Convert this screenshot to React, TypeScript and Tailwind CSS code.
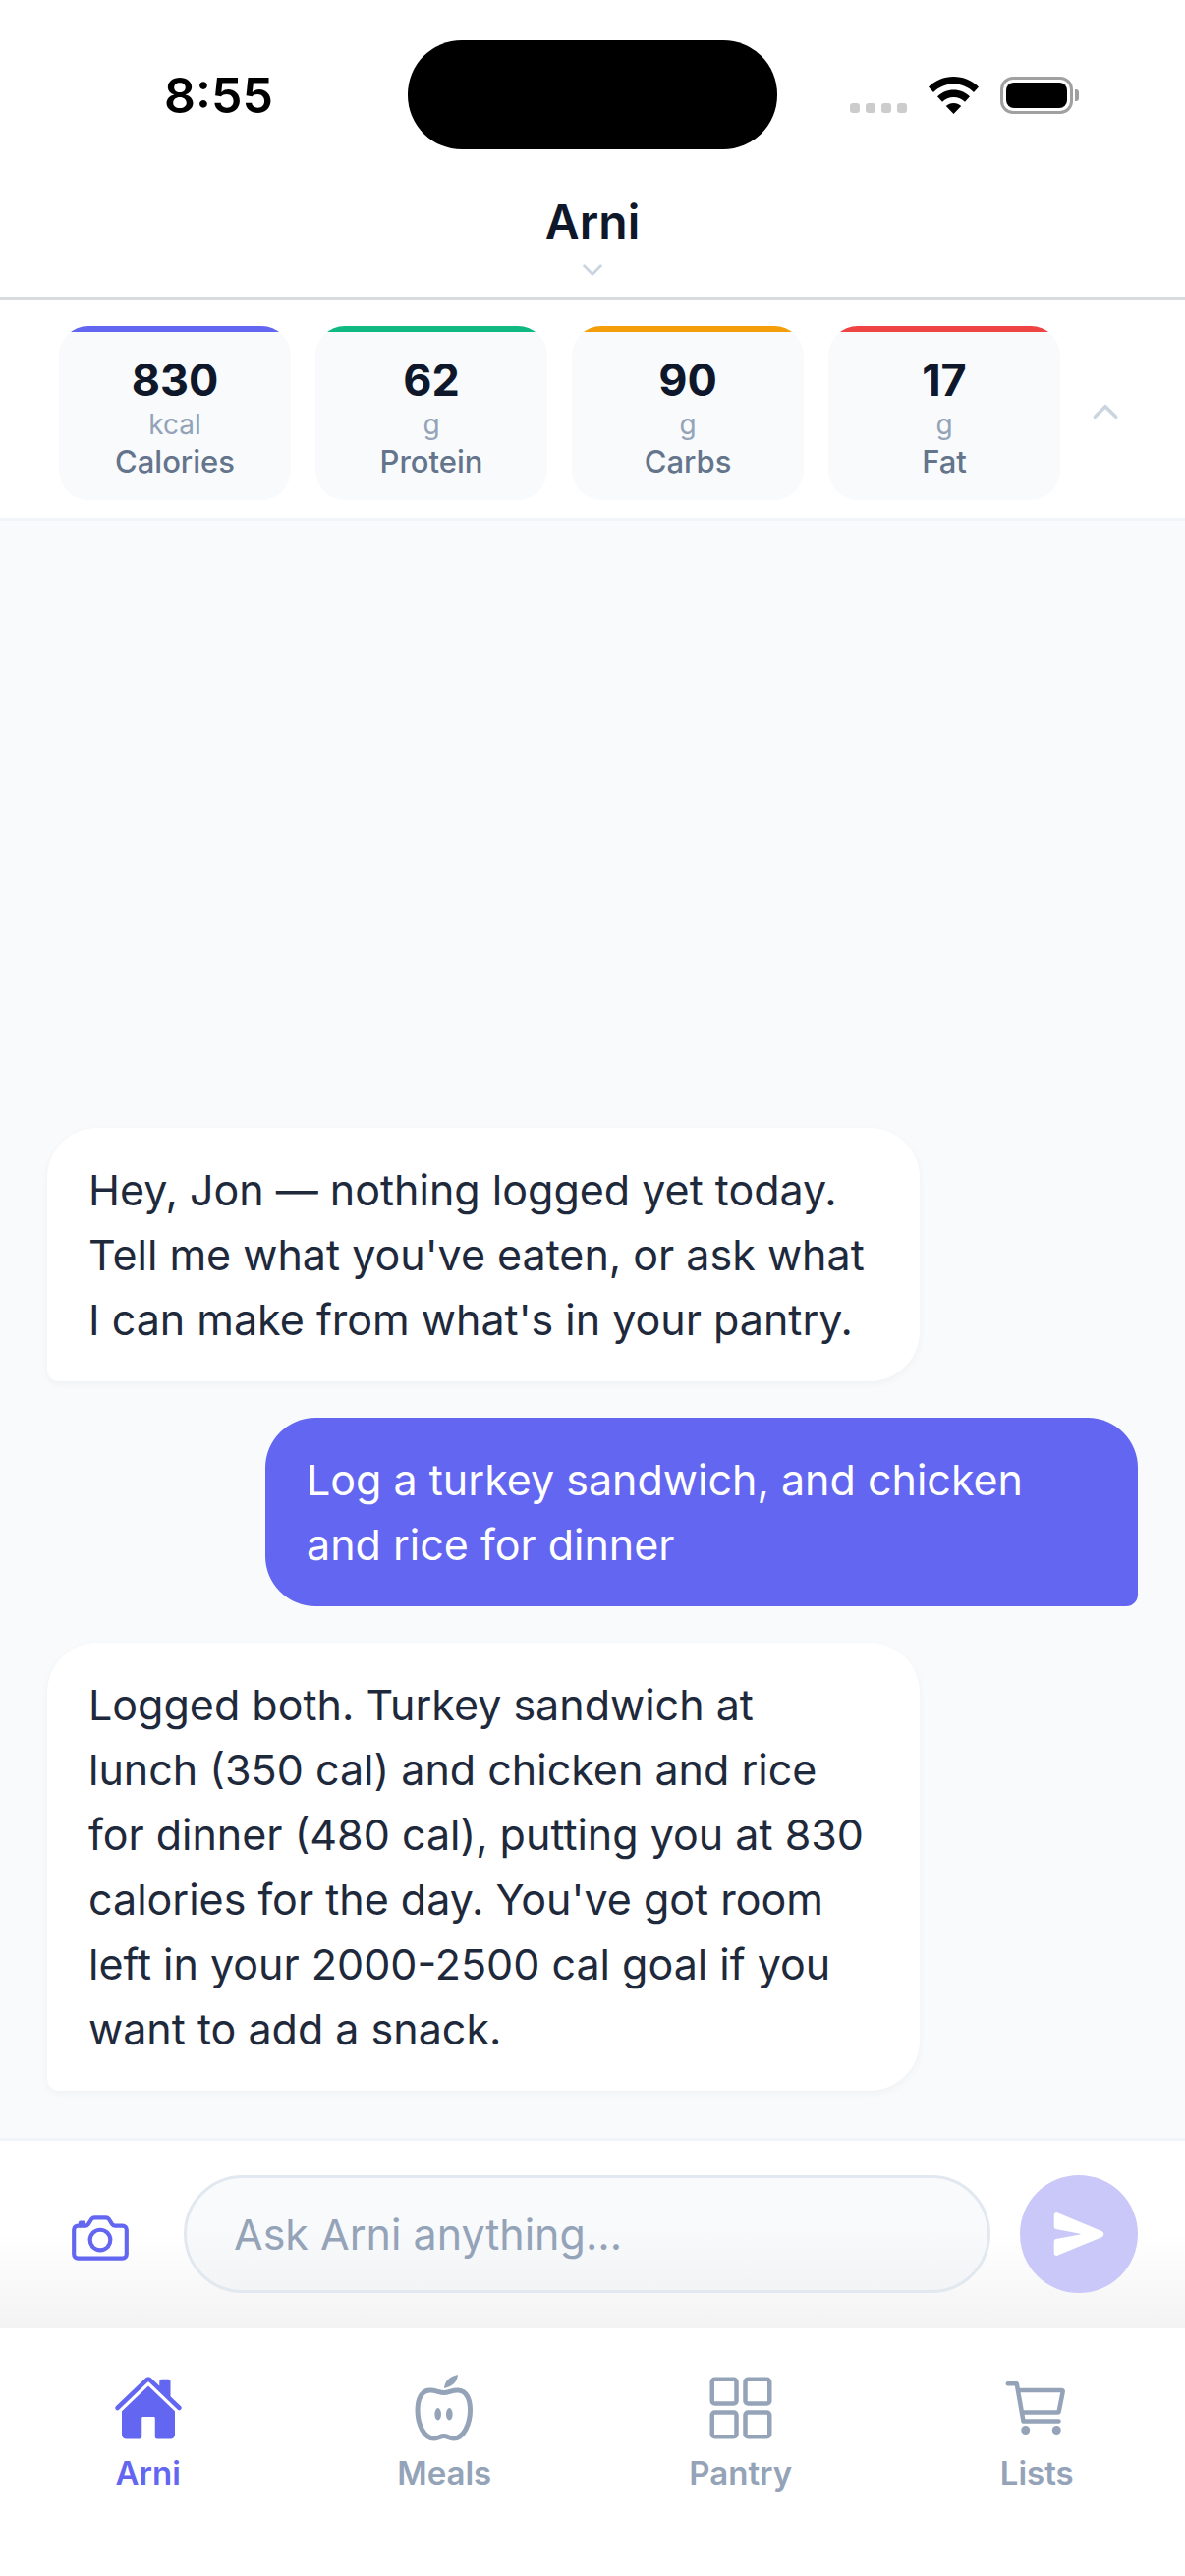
import React from 'react';
import { IoHome, IoGridOutline, IoCartOutline, IoCameraOutline, IoSend, IoChevronDown, IoChevronUp } from 'react-icons/io5';

const macros = [
  { value: '830', unit: 'kcal', label: 'Calories', bar: 'bg-[#6366f1]' },
  { value: '62', unit: 'g', label: 'Protein', bar: 'bg-[#10b981]' },
  { value: '90', unit: 'g', label: 'Carbs', bar: 'bg-[#f59e0b]' },
  { value: '17', unit: 'g', label: 'Fat', bar: 'bg-[#ef4444]' },
];

function StatusBar() {
  return (
    <div className="flex h-[152px] items-start pt-[41px]">
      <div className="flex h-[111px] w-[415px] items-center pl-[167px] text-[50px] leading-none font-semibold text-black">8:55</div>
      <div className="h-[111px] w-[376px] rounded-[55px] bg-black" />
      <div className="flex h-[111px] flex-1 items-center pl-[74px]">
        <div className="flex items-end gap-[22px]">
          <div className="flex gap-[6px] pb-[1px]">
            <div className="h-[10px] w-[10px] rounded-[3px] bg-[#cccccc]" />
            <div className="h-[10px] w-[10px] rounded-[3px] bg-[#cccccc]" />
            <div className="h-[10px] w-[10px] rounded-[3px] bg-[#cccccc]" />
            <div className="h-[10px] w-[10px] rounded-[3px] bg-[#cccccc]" />
          </div>
          <svg width="51" height="38" viewBox="0 0 51 38">
            <path d="M25.5 0C15.5 0 7 3.8 0 10.5l5 5.5C10.5 10.5 17.5 7.5 25.5 7.5S40.500 10.500 46 16l5-5.500C44 3.800 35.500 0 25.500 0Z" fill="#000" />
            <path d="M25.500 13.500c-6.500 0-12 2.500-16.500 6.800l5 5.500c3-3 7-4.800 11.500-4.800s8.500 1.800 11.500 4.800l5-5.500c-4.500-4.300-10-6.800-16.500-6.800Z" fill="#000" />
            <path d="M25.500 27c-3 0-5.500 1.100-7.700 3.100l7.700 7.900 7.700-7.900C31 28.100 28.500 27 25.500 27Z" fill="#000" />
          </svg>
          <div className="flex items-center gap-[2px]">
            <div className="h-[38px] w-[74px] rounded-[13px] border-[3px] border-[#a0a0a0] p-[3px]">
              <div className="h-full w-full rounded-[8px] bg-black" />
            </div>
            <div className="h-[12px] w-[4px] rounded-r-[3px] bg-[#a0a0a0]" />
          </div>
        </div>
      </div>
    </div>
  );
}

function MacroCard({ value, unit, label, bar }: { value: string; unit: string; label: string; bar: string }) {
  return (
    <div className="flex h-[177px] w-[236px] flex-col items-center overflow-hidden rounded-[30px] bg-[#f8fafc]">
      <div className={`h-[6px] w-full ${bar}`} />
      <div className="pt-[21px] text-[45px] leading-[56px] font-bold text-[#0f172a]">{value}</div>
      <div className="text-[28px] leading-[34px] text-[#94a3b8]">{unit}</div>
      <div className="pt-[1px] text-[31px] leading-[40px] font-medium text-[#64748b]">{label}</div>
    </div>
  );
}

function AppleIcon() {
  return (
    <svg width="72" height="72" viewBox="0 0 72 72" fill="none">
      <path d="M35.700 20.500C31 20.500 27 17.500 21 18C13 18.500 9 27 9 38C9 52 15 67 26 67C30 67 32 64.500 35.700 64.500C39.500 64.500 41.500 67 45.500 67C56 67 62.500 52 62.500 38C62.500 27 58.500 18.500 50.500 18C44.500 17.500 40.500 20.500 35.700 20.500Z" stroke="#94a3b8" strokeWidth="5" strokeLinejoin="round" />
      <path d="M36 16C36.500 9 41 4 50 2C49.500 9 45 14 36 16Z" fill="#94a3b8" />
      <ellipse cx="29.700" cy="42.300" rx="3.300" ry="6.200" fill="#94a3b8" />
      <ellipse cx="41.300" cy="42.300" rx="3.300" ry="6.200" fill="#94a3b8" />
    </svg>
  );
}

function Bubble({ side, children }: { side: 'in' | 'out'; children: React.ReactNode }) {
  if (side === 'out') {
    return (
      <div className="ml-auto w-[888px] rounded-[51px] rounded-br-[12px] bg-[#6366f1] px-[42px] py-[30px] text-[43px] leading-[66px] text-white">
        {children}
      </div>
    );
  }
  return (
    <div className="w-[888px] rounded-[51px] rounded-bl-[12px] bg-white px-[42px] py-[30px] text-[43px] leading-[66px] text-[#1e293b] shadow-[0_3px_9px_rgba(0,0,0,0.04)]">
      {children}
    </div>
  );
}

function NavItem({ icon, label, active }: { icon: React.ReactNode; label: string; active?: boolean }) {
  return (
    <div className={`flex flex-col items-center gap-[10px] ${active ? 'text-[#6366f1]' : 'text-[#94a3b8]'}`}>
      <div className="flex h-[72px] w-[72px] items-center justify-center">{icon}</div>
      <div className="text-[33px] leading-[40px] font-semibold">{label}</div>
    </div>
  );
}

export default function App() {
  return (
    <div className="flex h-[2622px] w-[1206px] flex-col overflow-hidden bg-white font-[family-name:Inter,sans-serif] antialiased">
      <div className="h-[305px] border-b-[3px] border-[#d9dcdf]">
        <StatusBar />
        <div className="pt-[50px] text-center text-[48px] leading-[48px] font-semibold text-[#0f172a]">Arni</div>
        <div className="flex justify-center pt-[10px] text-[#cbd5e1]">
          <IoChevronDown size={30} />
        </div>
      </div>

      <div className="flex h-[225px] items-start gap-[25px] border-b-[3px] border-[#f1f5f9] pl-[60px] pt-[27px]">
        {macros.map((m) => (
          <MacroCard key={m.label} {...m} />
        ))}
        <div className="pl-[2px] pt-[68px] text-[#cbd5e1]">
          <IoChevronUp size={38} />
        </div>
      </div>

      <div className="flex flex-1 flex-col justify-end gap-[37px] bg-[#f8fafc] px-[48px] pb-[48px]">
        <Bubble side="in">Hey, Jon — nothing logged yet today. Tell me what you've eaten, or ask what I can make from what's in your pantry.</Bubble>
        <Bubble side="out">Log a turkey sandwich, and chicken and rice for dinner</Bubble>
        <Bubble side="in">
          Logged both. Turkey sandwich at
          <br />
          lunch (350 cal) and chicken and rice for dinner (480 cal), putting you at 830 calories for the day. You've got room left in your 2000-2500 cal goal if you want to add a snack.
        </Bubble>
      </div>

      <div className="flex h-[194px] items-start border-t-[3px] border-[#f1f5f9] bg-gradient-to-b from-white from-50% to-[#f3f3f3] pt-[35px] pl-[66px] pr-[48px]">
        <div className="flex h-[120px] w-[72px] items-center justify-center pt-[8px] text-[#6366f1]">
          <IoCameraOutline size={66} />
        </div>
        <div className="ml-[49px] flex h-[120px] w-[821px] items-center rounded-[60px] border-[3px] border-[#e2e8f0] bg-gradient-to-b from-[#f8fafc] from-40% to-[#f3f4f6] pl-[48px] text-[43px] text-[#94a3b8]">
          Ask Arni anything...
        </div>
        <div className="ml-[30px] flex h-[120px] w-[120px] items-center justify-center rounded-full bg-[#c9c8f9] text-white">
          <IoSend size={54} />
        </div>
      </div>

      <div className="grid h-[252px] grid-cols-4 pt-[45px]">
        <NavItem active label="Arni" icon={<IoHome size={72} />} />
        <NavItem label="Meals" icon={<AppleIcon />} />
        <NavItem label="Pantry" icon={<IoGridOutline size={72} />} />
        <NavItem label="Lists" icon={<IoCartOutline size={72} />} />
      </div>
    </div>
  );
}
